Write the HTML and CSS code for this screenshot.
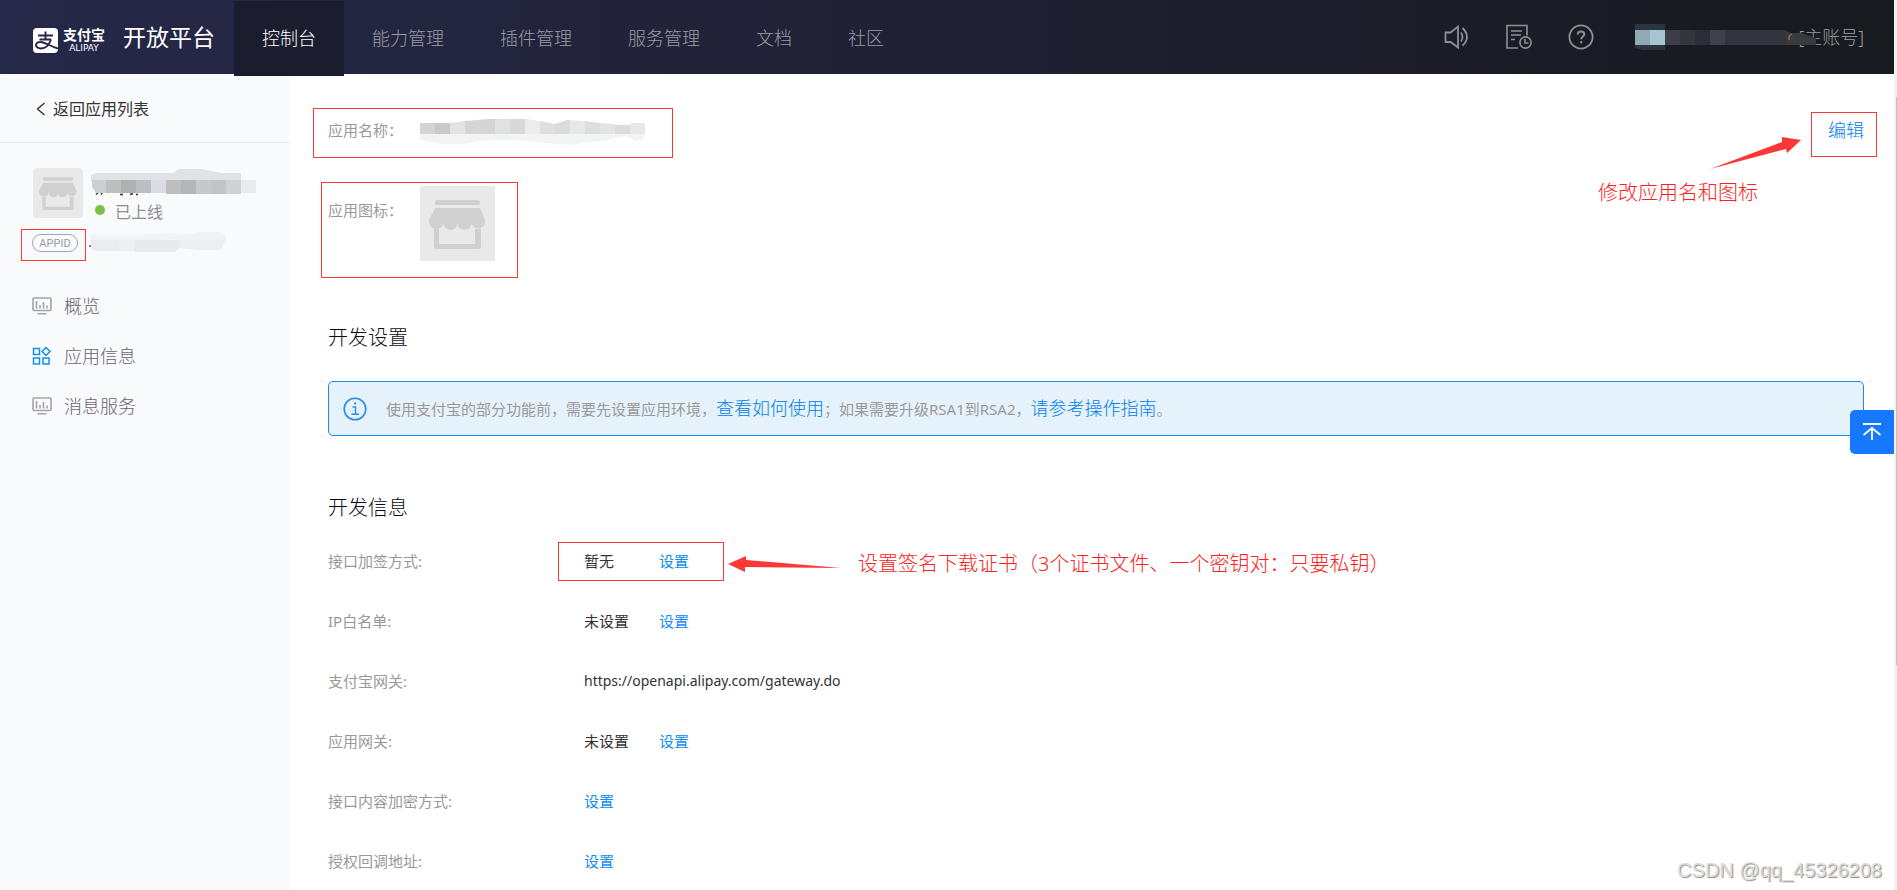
FILE: index.html
```html
<!DOCTYPE html>
<html lang="zh-CN">
<head>
<meta charset="utf-8">
<title>应用信息 - 开放平台</title>
<link rel="stylesheet" href="styles.css">
</head>
<body>
<svg class="sprite" aria-hidden="true">
  <symbol id="shop" viewBox="0 0 75 75">
    <rect width="75" height="75" fill="#e9e9e9"/>
    <g fill="#d0d0d0">
      <rect x="15" y="14" width="45" height="5" rx="2"/>
      <path d="M15 22H60L65 34A6.800 6.800 0 0 1 51.500 37A7 7 0 0 1 37.500 37A7 7 0 0 1 23.500 37A6.800 6.800 0 0 1 9 34Z"/>
      <path d="M14 43H19V58H55V43H61V60Q61 63 58 63H17Q14 63 14 60Z"/>
    </g>
  </symbol>
  <symbol id="board" viewBox="0 0 20 18">
    <g fill="none" stroke="#a3a3a8" stroke-width="1.600">
      <rect x="1" y="1" width="18" height="12.500" rx="1"/>
      <path d="M4.500 4V11.500M8 8V11.500M11.500 5V11.500M15 8.500V11.500M5.500 16.800H14.500"/>
    </g>
  </symbol>
</svg>
<div class="app">
  <header class="header">
    <a class="brand" href="#">
      <svg class="brand-mark" viewBox="0 0 25 25" aria-hidden="true">
        <rect width="25" height="25" rx="4" fill="#fff"/>
        <g fill="none" stroke="#252745" stroke-width="1.900">
          <path d="M5 7.500H20M12.500 3.500V11.500M6.500 11.500H18"/>
          <path d="M18 11.500C16.500 16 13 20.500 8 20.500C4.500 20.500 2.800 18.600 3 16.800C3.300 14.500 6 13.700 9 14.200C13 15 18 18.500 25 20.500"/>
        </g>
      </svg>
      <span class="brand-name"><span class="brand-cn">支付宝</span><span class="brand-en">ALIPAY</span></span>
      <span class="brand-title">开放平台</span>
    </a>
    <nav class="nav">
      <a class="nav-item active" href="#">控制台</a>
      <a class="nav-item" href="#">能力管理</a>
      <a class="nav-item" href="#">插件管理</a>
      <a class="nav-item" href="#">服务管理</a>
      <a class="nav-item" href="#">文档</a>
      <a class="nav-item" href="#">社区</a>
    </nav>
    <div class="tools">
      <button class="tool" aria-label="公告">
        <svg viewBox="0 0 26 26"><g fill="none" stroke="#8f9094" stroke-width="1.800"><path d="M1.500 8.500H6.500L14 2.500V23.500L6.500 18H1.500Z"/><path d="M17 8.500Q20 13 17 17.500M18.500 4Q27.500 13 18.500 21.500"/></g></svg>
      </button>
      <button class="tool" aria-label="工单">
        <svg viewBox="0 0 26 26"><g fill="none" stroke="#8f9094" stroke-width="1.600"><path d="M12 24H1V1.500H21V11.500M5 7H16M5 11H15M5 15.500H9"/><circle cx="19.500" cy="18.500" r="5.600"/><path d="M19 15V19H22.500"/></g></svg>
      </button>
      <button class="tool" aria-label="帮助">
        <svg viewBox="0 0 26 26"><circle cx="13" cy="13" r="11.600" fill="none" stroke="#8f9094" stroke-width="1.800"/><path d="M9.700 10.500Q9.800 7.500 13 7.500T16.300 10.300C16.300 12.500 13.200 12.500 13.200 15.300" fill="none" stroke="#8f9094" stroke-width="2"/><rect x="12.200" y="17" width="2" height="2.200" fill="#8f9094"/></svg>
      </button>
      <div class="account">
        <span>[主账号]</span>
        <svg class="account-mask" viewBox="0 0 182 26" aria-hidden="true">
          <path d="M0 0H30V26H8L0 24Z" fill="#2c353f"/>
          <rect y="6" width="15" height="15" fill="#8faab5"/><rect x="15" y="6" width="15" height="15" fill="#a4c5d1"/>
          <rect x="30" y="6" width="15" height="15" fill="#3c3e48"/><rect x="45" y="6" width="15" height="15" fill="#33353a"/>
          <rect x="60" y="6" width="15" height="15" fill="#2b2e37"/><rect x="75" y="6" width="15" height="15" fill="#40414b"/>
          <rect x="90" y="6" width="60" height="15" fill="#32353d"/><path d="M150 6L155 9H166L181 14V21H150Z" fill="#383b3d"/>
          <path d="M154 16V12L157 10" fill="none" stroke="#bd8a4b"/>
        </svg>
      </div>
    </div>
  </header>

  <div class="body">
    <aside class="sidebar">
      <a class="back" href="#"><svg viewBox="0 0 10 14" aria-hidden="true"><path d="M8.500 1L1.500 7L8.500 13" fill="none" stroke="#333" stroke-width="1.400"/></svg>返回应用列表</a>
      <div class="profile">
        <svg class="profile-icon" viewBox="0 0 75 75"><use href="#shop"/></svg>
        <div class="profile-info">
          <svg class="profile-mask" viewBox="0 0 165 27" aria-hidden="true">
            <path d="M5 25.500L7 24M10 25.500L11 24M29 25.500H32M39 25.500L42 24.500M45 25.500H47" stroke="#333" stroke-width="1.500"/>
            <path d="M0 6L5 4H82L88 0H110L130 4H150V12H0Z" fill="#e0e3e5"/>
            <path d="M1 11H15V24H5L1 18Z" fill="#ccced1"/><rect x="15" y="11" width="15" height="13" fill="#bdbfbf"/>
            <rect x="30" y="11" width="15" height="13" fill="#aeb2b3"/><rect x="45" y="11" width="15" height="13" fill="#bcbec3"/>
            <rect x="60" y="11" width="15" height="13" fill="#dadce1"/><rect x="75" y="11" width="15" height="14" fill="#bebebf"/>
            <rect x="90" y="11" width="15" height="14" fill="#b5b6b8"/><rect x="105" y="11" width="15" height="14" fill="#c4c9ce"/>
            <rect x="120" y="11" width="15" height="14" fill="#c2c4c8"/><rect x="135" y="11" width="15" height="14" fill="#cfd2d3"/>
            <rect x="150" y="11" width="15" height="13" fill="#e8eaed"/>
          </svg>
          <span class="status">已上线</span>
        </div>
      </div>
      <div class="appid">
        <span class="appid-tag">APPID</span>
        <svg class="appid-mask" viewBox="0 0 137 22" aria-hidden="true">
          <path d="M2 3H52L60 2L85 1L92 3L110 0H132L137 3V12H2Z" fill="#f2f3f5"/>
          <path d="M2 8H30V19H8L2 17Z" fill="#ebecef"/><rect x="30" y="8" width="15" height="11" fill="#edf0f2"/>
          <path d="M45 8H90V16L86 20H45Z" fill="#e8e9ec"/><path d="M90 8H135L134 15L130 18H110L90 16Z" fill="#eceef0"/>
          <rect y="13" width="2" height="2" fill="#888"/>
        </svg>
        <i class="mark mark-appid"></i>
      </div>
      <nav class="menu">
        <a href="#"><svg viewBox="0 0 20 18"><use href="#board"/></svg>概览</a>
        <a href="#"><svg viewBox="0 0 20 18"><g fill="none" stroke="#148eee" stroke-width="1.500"><rect x="1.500" y="1.500" width="6" height="6"/><path d="M14 .500L18 4.500L14 8.500L10 4.500Z"/><rect x="1.500" y="11" width="6" height="6"/><rect x="11" y="11" width="6" height="6"/></g></svg>应用信息</a>
        <a href="#"><svg viewBox="0 0 20 18"><use href="#board"/></svg>消息服务</a>
      </nav>
    </aside>

    <main class="main">
      <section class="basic">
        <div class="basic-fields">
          <div class="field">
            <span class="field-label">应用名称：</span>
            <svg class="name-mask" viewBox="0 0 225 26" aria-hidden="true">
              <path d="M0 15H225L222 21L215 22L206 17L180 22L150 26L125 24L105 22L85 21L60 22L42 25H25L8 23L0 20Z" fill="#f3f4f4"/>
              <rect y="4" width="15" height="11" fill="#d4d4d5"/><rect x="15" y="4" width="15" height="11" fill="#c9c9c8"/>
              <path d="M30 4L45 2V15H30Z" fill="#e3e3e1"/><path d="M45 2L68 0H75V15H45Z" fill="#d5d5d5"/>
              <path d="M75 0H90V15H75Z" fill="#dfe1e3"/><rect x="90" width="15" height="15" fill="#d9d9d9"/>
              <path d="M105 0L120 2V15H105Z" fill="#ebecee"/><path d="M120 2L135 5V15H120Z" fill="#e0dfde"/>
              <path d="M135 5L147 1H150V15H135Z" fill="#dadbe0"/><path d="M150 1L165 2V15H150Z" fill="#e8e8e8"/>
              <path d="M165 2L180 4V15H165Z" fill="#dddede"/><path d="M180 4L195 5V15H180Z" fill="#e3e4e6"/>
              <path d="M195 6H210V15H195Z" fill="#dcdcdb"/><path d="M210 5L213 4H225V15H210Z" fill="#e6e7ec"/>
            </svg>
            <i class="mark mark-name"></i>
          </div>
          <div class="field field-icon">
            <span class="field-label">应用图标：</span>
            <svg class="app-icon" viewBox="0 0 75 75"><use href="#shop"/></svg>
            <i class="mark mark-icon"></i>
          </div>
        </div>
        <div class="edit">
          <a href="#">编辑</a>
          <i class="mark mark-edit"></i>
          <svg class="arrow arrow-edit" viewBox="0 0 92 34" aria-hidden="true"><path d="M0 33L72 6L72 1L91 4L77 17L76 13Z" fill="#fc3836"/></svg>
          <span class="note note-edit">修改应用名和图标</span>
        </div>
      </section>

      <h2>开发设置</h2>
      <div class="alert">
        <svg viewBox="0 0 24 24" aria-hidden="true"><circle cx="12" cy="12" r="10.800" fill="none" stroke="#2b8ae8" stroke-width="1.600"/><path d="M9.500 10H12.500V17M8.500 17.300H16" fill="none" stroke="#2b8ae8" stroke-width="1.400"/><rect x="11.200" y="5.500" width="2" height="2" fill="#2b8ae8"/></svg>
        <p>使用支付宝的部分功能前，需要先设置应用环境，<a href="#">查看如何使用</a>；如果需要升级RSA1到RSA2，<a href="#">请参考操作指南</a>。</p>
      </div>

      <h2 class="second">开发信息</h2>
      <dl class="rows">
        <div class="row"><dt>接口加签方式:</dt><dd><span class="value">暂无</span><a href="#">设置</a>
          <i class="mark mark-sign"></i>
          <svg class="arrow arrow-sign" viewBox="0 0 114 18" aria-hidden="true"><path d="M0 9L18 1V5L113 13L17 12V17Z" fill="#fc3836"/></svg>
          <span class="note note-sign">设置签名下载证书（3个证书文件、一个密钥对：只要私钥）</span></dd></div>
        <div class="row"><dt>IP白名单:</dt><dd><span class="value">未设置</span><a class="bright" href="#">设置</a></dd></div>
        <div class="row"><dt>支付宝网关:</dt><dd class="url">https://openapi.alipay.com/gateway.do</dd></div>
        <div class="row"><dt>应用网关:</dt><dd><span class="value">未设置</span><a href="#">设置</a></dd></div>
        <div class="row"><dt>接口内容加密方式:</dt><dd><a href="#">设置</a></dd></div>
        <div class="row"><dt>授权回调地址:</dt><dd><a href="#">设置</a></dd></div>
      </dl>
    </main>
  </div>
  <button class="to-top" aria-label="回到顶部"><svg viewBox="0 0 20 20"><path d="M1 2H19M10 18V6M1.500 13L10 6L18.500 13" fill="none" stroke="#fff" stroke-width="1.800"/></svg></button>
  <span class="watermark">CSDN @qq_45326208</span>
</div>
<div class="scrollbar"><div class="thumb"></div></div>
</body>
</html>
```
FILE: styles.css
```css
* { box-sizing: border-box; }
body {
  margin: 0;
  height: 100vh;
  display: grid;
  grid-template-columns: 1fr 3px;
  overflow: hidden;
  background: #fff;
  color: #333;
  font: 15px/24px "Noto Sans", "Noto Sans CJK SC", sans-serif;
}
a { color: #148eee; text-decoration: none; }
button { border: 0; padding: 0; background: none; }
svg { display: block; flex: none; }
.sprite { position: absolute; width: 0; height: 0; }
.app { position: relative; display: flex; flex-direction: column; min-width: 0; height: 100vh; }

.header {
  position: relative;
  z-index: 1;
  flex: none;
  display: flex;
  align-items: center;
  height: 74px;
  padding: 0 30px 0 33px;
  background: linear-gradient(90deg, #262849, #222339 35%, #1c1d2a 70%, #171a1f);
}
.brand { display: flex; align-items: center; width: 201px; color: #fff; }
.brand-mark { width: 25px; height: 25px; margin-top: 7px; }
.brand-name { display: flex; flex-direction: column; width: 42px; margin: 6px 0 0 5px; }
.brand-cn { font-size: 14px; line-height: 16px; font-weight: 700; }
.brand-en { font: 9px/10px "DejaVu Sans", sans-serif; text-align: center; }
.brand-title { margin-left: 18px; font-size: 23px; line-height: 32px; }
.nav { display: flex; align-self: flex-start; }
.nav-item { height: 75px; margin-top: 1px; padding: 0 28px; font-size: 18px; line-height: 74px; font-weight: 300; color: #9c9da5; }
.nav-item.active { background: #1b1d2f; color: #fff; }
.tools { display: flex; align-items: center; margin-left: auto; }
.tool { width: 26px; height: 26px; margin-right: 36px; }
.tool svg { width: 26px; height: 26px; }
.account { position: relative; width: 230px; margin-left: 4px; text-align: right; font-size: 18px; font-weight: 300; color: #9c9da0; }
.account-mask { position: absolute; left: 1px; top: -1px; width: 182px; height: 26px; }

.body { flex: 1; display: flex; min-height: 0; }
.sidebar { flex: none; width: 290px; background: #f9fafc; }
.back { display: flex; align-items: center; gap: 7px; height: 69px; padding: 2px 0 0 36px; border-bottom: 1px solid #ededf0; font-size: 16px; color: #333; }
.back svg { width: 10px; height: 14px; }
.profile { display: flex; gap: 8px; padding: 25px 0 0 33px; }
.profile-icon { width: 50px; height: 50px; border-radius: 4px; }
.profile-mask { width: 165px; height: 27px; margin-top: 1px; }
.status { display: flex; align-items: center; gap: 10px; margin: 4px 0 0 4px; font-size: 16px; color: #8f8f92; }
.status::before { content: ""; width: 10px; height: 10px; margin-top: -4px; border-radius: 50%; background: #7ac143; }
.appid { position: relative; display: flex; align-items: center; gap: 11px; height: 22px; margin: 8px 0 0 32px; }
.appid-tag { width: 46px; height: 18px; border: 1px solid #a5a3b2; border-radius: 9px; font: 11px/17px Roboto, sans-serif; text-align: center; color: #9b9ba6; }
.appid-mask { width: 137px; height: 22px; }
.menu { padding-top: 27px; }
.menu a { display: flex; align-items: center; gap: 12px; height: 50px; padding-left: 32px; font-size: 18px; font-weight: 300; color: #666670; }
.menu svg { width: 20px; height: 18px; }

.main { flex: 1; min-width: 0; overflow: hidden; padding: 44px 30px 0 38px; }
.basic { display: flex; justify-content: space-between; }
.field { position: relative; display: flex; align-items: flex-start; }
.field-label { width: 92px; color: #999; }
.name-mask { width: 225px; height: 26px; margin-top: 1px; margin-bottom: -1px; }
.field-icon { margin-top: 42px; }
.field-icon .field-label { padding-top: 12px; }
.app-icon { width: 75px; height: 75px; }
.edit { position: relative; height: 24px; font-size: 18px; line-height: 24px; font-weight: 300; }
h2 { margin: 62px 0 0; font-size: 20px; line-height: 30px; font-weight: 300; color: #0c0c18; }
.second { margin-top: 57px; }
.alert { display: flex; align-items: center; gap: 19px; min-height: 55px; margin-top: 28px; padding: 0 14px; border: 1px solid #148eee; border-radius: 5px; background: #e6f2fb; }
.alert svg { width: 24px; height: 24px; }
.alert p { margin: 0; color: #999; }
.alert a { font-size: 18px; font-weight: 300; color: #0080ea; }
.edit a { color: #0080ea; }
.rows { margin: 8px 0 0; }
.row { display: flex; align-items: center; height: 60px; }
dt { width: 256px; color: #999; }
dd { position: relative; display: flex; margin: 0; }
.url { font-size: 14px; }
.value { width: 75px; }
.bright { color: #1a8cff; }

.mark { position: absolute; border: 1px solid #fc3836; }
.mark-appid { left: -11px; top: -3px; width: 65px; height: 32px; }
.mark-name { left: -15px; top: -10px; width: 360px; height: 50px; }
.mark-icon { left: -7px; top: -4px; width: 197px; height: 96px; }
.mark-edit { left: -17px; top: -6px; width: 66px; height: 45px; }
.mark-sign { left: -26px; top: -7px; width: 166px; height: 39px; }
.arrow { position: absolute; }
.arrow-edit { right: 62px; top: 18px; width: 92px; height: 34px; }
.arrow-sign { left: 144px; top: 6px; width: 114px; height: 18px; }
.note { position: absolute; white-space: nowrap; font-size: 20px; line-height: 30px; font-weight: 300; color: #fc2020; }
.note-edit { right: 106px; top: 60px; }
.note-sign { left: 274px; top: 0; }

.to-top { position: absolute; right: 0; top: 410px; width: 44px; height: 44px; border-radius: 5px 0 0 5px; background: #1677ff; }
.to-top svg { width: 20px; height: 20px; margin: 0 auto; }
.watermark { position: absolute; right: 12px; bottom: 8px; font: 20px/24px "Liberation Sans", sans-serif; color: #ddd; text-shadow: 1px 1px 1px #8a8a8a; }
.scrollbar { padding: 97px 0 0 2px; background: #f1f1f1; }
.thumb { height: 568px; background: #c1c1c1; }
```
